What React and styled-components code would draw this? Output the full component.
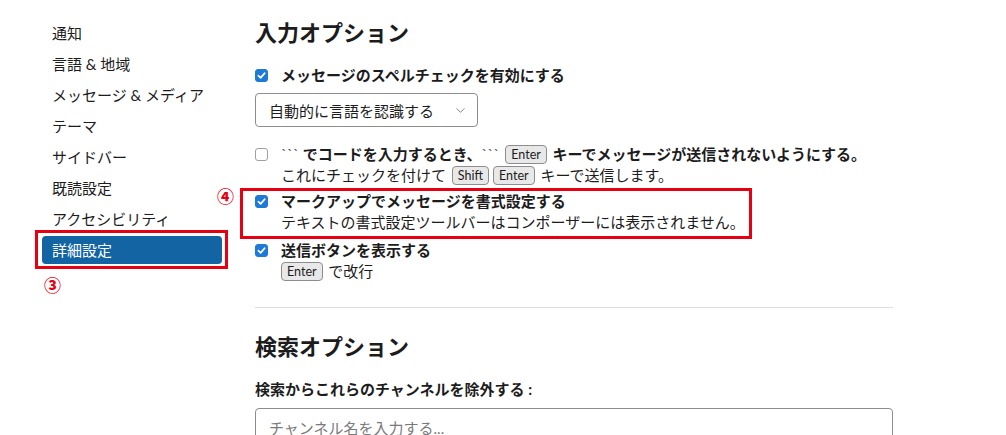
import React from 'react';
import styled, { createGlobalStyle } from 'styled-components';
import { ChevronDown } from 'lucide-react';

const GlobalStyle = createGlobalStyle`
  body {
    margin: 0;
    background: #fff;
    font-family: Lato, "Noto Sans CJK JP", sans-serif;
    color: #1d1c1d;
  }
`;

const Page = styled.div`
  display: flex;
  width: 1006px;
  height: 435px;
  overflow: hidden;
`;

const Sidebar = styled.nav`
  width: 180px;
  margin-left: 42px;
  padding-top: 19px;
  display: flex;
  flex-direction: column;
  gap: 3px;
`;

const NavItem = styled.div`
  position: relative;
  height: 28px;
  line-height: 28px;
  padding-left: 10px;
  border-radius: 4px;
  font-size: 15px;
  background: ${({ active }) => (active ? '#1264a3' : 'transparent')};
  color: ${({ active }) => (active ? '#fff' : '#1d1c1d')};
`;

const Frame = styled.div`
  position: absolute;
  border: 3px solid #e50012;
  pointer-events: none;
`;

const NavFrame = styled(Frame)`
  top: -6px;
  bottom: -5px;
  left: -7px;
  right: -6px;
`;

const Marker = styled.span`
  position: absolute;
  color: #e50012;
  font-family: "Noto Sans CJK JP", sans-serif;
  font-weight: 900;
  font-size: 17px;
  line-height: 17px;
`;

const Main = styled.main`
  margin-left: 33px;
  width: 638px;
  padding-top: 18px;
`;

const Heading = styled.h2`
  margin: 0;
  font-size: 22px;
  line-height: 30px;
  font-weight: 700;
`;

const Option = styled.div`
  position: relative;
  display: flex;
  gap: 13px;
  margin-top: ${({ mt }) => mt}px;
`;

const Box = styled.span`
  flex: none;
  width: 13px;
  height: 13px;
  margin-top: 4px;
  box-sizing: border-box;
  border-radius: 3px;
  border: 1px solid ${({ checked }) => (checked ? '#1d7ad6' : '#a0a0a0')};
  background: ${({ checked }) => (checked ? '#1d7ad6' : '#fff')};
  display: flex;
  align-items: center;
  justify-content: center;
`;

const Texts = styled.div`
  display: flex;
  flex-direction: column;
`;

const Label = styled.div`
  font-size: 15px;
  line-height: 21px;
  font-weight: 700;
  white-space: nowrap;
`;

const Hint = styled.div`
  font-size: 15px;
  line-height: 21px;
  white-space: nowrap;
`;

const Kbd = styled.kbd`
  display: inline-block;
  font-family: Lato, "Noto Sans CJK JP", sans-serif;
  font-size: 12.5px;
  font-weight: 400;
  line-height: 17px;
  padding: 0 5px;
  margin: 0 2px;
  background: #e8e8e8;
  border: 1px solid #8d8d8d;
  border-radius: 4px;
  color: #1d1c1d;
  vertical-align: 1px;
`;

const Tick = styled.span`
  font-weight: 400;
  color: #555;
`;

const Select = styled.div`
  margin-top: 7px;
  width: 223px;
  height: 34px;
  box-sizing: border-box;
  border: 1px solid #8d8d8d;
  border-radius: 4px;
  display: flex;
  align-items: center;
  justify-content: space-between;
  padding: 0 9px 0 13px;
  font-size: 15px;
`;

const OptionFrame = styled(Frame)`
  top: -3px;
  bottom: -6px;
  left: -15px;
  width: 506px;
`;

const Divider = styled.hr`
  margin: 25px 0 0;
  border: none;
  border-top: 1px solid #dddddd;
`;

const FieldLabel = styled.div`
  margin-top: 17px;
  font-size: 15px;
  line-height: 20px;
  font-weight: 700;
`;

const Input = styled.div`
  margin-top: 9px;
  height: 38px;
  box-sizing: border-box;
  border: 1px solid #8d8d8d;
  border-radius: 4px;
  padding: 0 13px;
  display: flex;
  align-items: center;
  font-size: 15px;
  color: #7a7a7a;
`;

const Check = ({ checked }) => (
  <Box checked={checked}>
    {checked && (
      <svg width="9" height="9" viewBox="0 0 10 10">
        <path d="M1.5 5.2 L4 7.6 L8.6 2.4" fill="none" stroke="#fff" strokeWidth="1.8" strokeLinecap="round" strokeLinejoin="round" />
      </svg>
    )}
  </Box>
);

const navItems = ['通知', '言語 & 地域', 'メッセージ & メディア', 'テーマ', 'サイドバー', '既読設定', 'アクセシビリティ'];

export default function App() {
  return (
    <>
      <GlobalStyle />
      <Page>
        <Sidebar>
          {navItems.map((item) => (
            <NavItem key={item}>{item}</NavItem>
          ))}
          <NavItem active>
            詳細設定
            <NavFrame />
            <Marker style={{ left: 2, top: 40 }}>③</Marker>
          </NavItem>
        </Sidebar>
        <Main>
          <Heading>入力オプション</Heading>
          <Option mt={17}>
            <Check checked />
            <Texts>
              <Label>メッセージのスペルチェックを有効にする</Label>
            </Texts>
          </Option>
          <Select>
            自動的に言語を認識する
            <ChevronDown size={15} strokeWidth={1.4} color="#7a7a7a" />
          </Select>
          <Option mt={17}>
            <Check />
            <Texts>
              <Label>
                <Tick>```</Tick> でコードを入力するとき、<Tick>```</Tick> <Kbd>Enter</Kbd> キーでメッセージが送信されないようにする。
              </Label>
              <Hint>
                これにチェックを付けて <Kbd>Shift</Kbd><Kbd>Enter</Kbd> キーで送信します。
              </Hint>
            </Texts>
          </Option>
          <Option mt={5}>
            <Check checked />
            <Texts>
              <Label>マークアップでメッセージを書式設定する</Label>
              <Hint>テキストの書式設定ツールバーはコンポーザーには表示されません。</Hint>
            </Texts>
            <OptionFrame />
            <Marker style={{ left: -38, top: -4 }}>④</Marker>
          </Option>
          <Option mt={7}>
            <Check checked />
            <Texts>
              <Label>送信ボタンを表示する</Label>
              <Hint>
                <Kbd style={{ marginLeft: 0 }}>Enter</Kbd> で改行
              </Hint>
            </Texts>
          </Option>
          <Divider />
          <Heading style={{ marginTop: 24 }}>検索オプション</Heading>
          <FieldLabel>検索からこれらのチャンネルを除外する :</FieldLabel>
          <Input>チャンネル名を入力する...</Input>
        </Main>
      </Page>
    </>
  );
}
